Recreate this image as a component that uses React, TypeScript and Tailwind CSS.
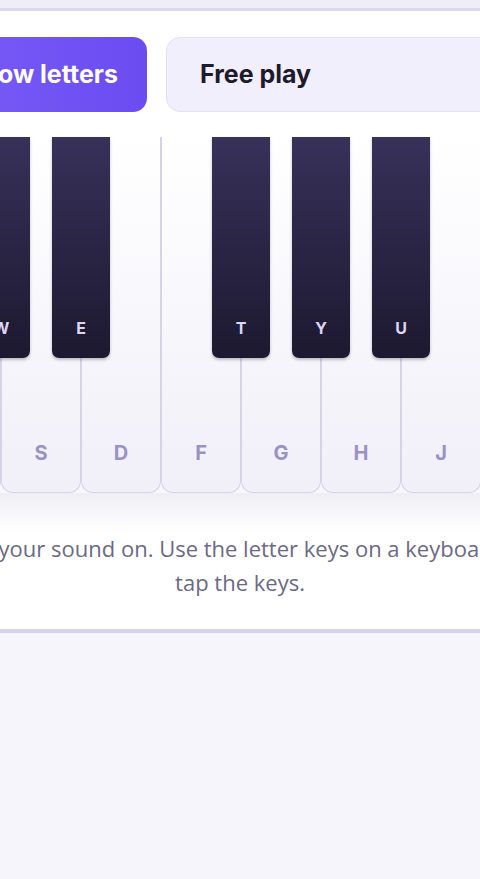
import React from "react";

const whiteKeys = [
  { letter: "A", sharp: "W" },
  { letter: "S", sharp: "E" },
  { letter: "D", sharp: null },
  { letter: "F", sharp: "T" },
  { letter: "G", sharp: "Y" },
  { letter: "H", sharp: "U" },
  { letter: "J", sharp: null },
  { letter: "K", sharp: "O" },
];

const bold = { fontFamily: "Inter, 'Noto Sans', sans-serif" };

function WhiteKey({ letter, sharp }: { letter: string; sharp: string | null }) {
  return (
    <div className="relative w-[80px] h-[356px] shrink-0 rounded-b-[12px] border border-t-0 border-[#d6d2e8] bg-gradient-to-b from-white to-[#f1eff8] flex items-end justify-center pb-[24px]">
      <span className="text-[20px] font-bold text-[#9a91c7]" style={bold}>
        {letter}
      </span>
      {sharp && (
        <div className="absolute top-0 -right-[30px] z-10 w-[58px] h-[221px] rounded-b-[7px] bg-gradient-to-b from-[#38315a] to-[#1d1930] shadow-[0_2px_3px_rgba(20,16,40,0.25)] flex items-end justify-center pb-[18px]">
          <span className="text-[16px] font-bold text-[#dcd6f7]" style={bold}>
            {sharp}
          </span>
        </div>
      )}
    </div>
  );
}

export default function App() {
  return (
    <div className="w-full min-h-[879px] overflow-hidden bg-[#f6f5fc]">
      <div className="bg-white border-b-[4px] border-[#d6d0f1]">
        <div className="h-[11px] bg-[#efeef6] border-b-[3px] border-[#dcd8f3]" />

        <div className="flex gap-[19px] -ml-[64px] pt-[26px]">
          <button
            className="w-[211px] h-[75px] shrink-0 rounded-[14px] bg-gradient-to-r from-[#7a5cf8] to-[#6a4cf1] text-white text-[25px] font-bold text-left pl-[30px]"
            style={bold}
          >
            Show letters
          </button>
          <button
            className="w-[420px] h-[75px] shrink-0 rounded-[14px] bg-[#f1effb] border border-[#e3e0f2] text-[#1d1a2c] text-[25px] font-bold text-left pl-[33px]"
            style={bold}
          >
            Free play
          </button>
        </div>

        <div className="mt-[3px] pt-[22px] bg-gradient-to-b from-white to-[#f8f7fb]">
          <div className="flex -ml-[79px]">
            {whiteKeys.map((k) => (
              <WhiteKey key={k.letter} letter={k.letter} sharp={k.sharp} />
            ))}
          </div>
        </div>

        <div className="h-[38px] bg-gradient-to-b from-[#efeef5] to-white" />

        <p
          className="-mx-[200px] text-center text-[22px] leading-[34px] text-[#6c6983] pb-[30px]"
          style={{ fontFamily: "'Open Sans', 'Noto Sans', sans-serif" }}
        >
          Turn your sound on. Use the letter keys on a keyboard, or
          <br />
          tap the keys.
        </p>
      </div>
    </div>
  );
}
